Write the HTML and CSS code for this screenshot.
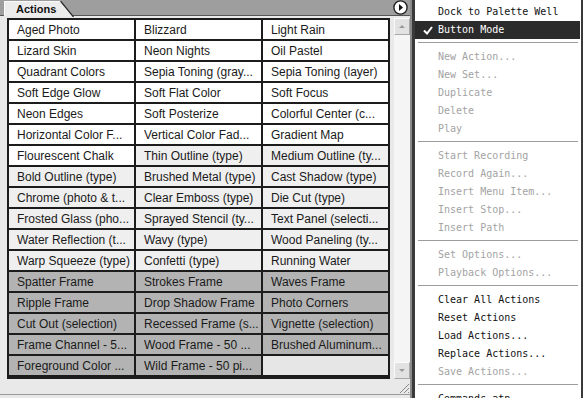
FILE: index.html
```html
<!DOCTYPE html>
<html lang="en">
<head>
  <meta charset="UTF-8">
  <title>Actions Palette</title>
  <link rel="stylesheet" href="styles.css">
</head>
<body>
  <div class="screen">
    <div class="panel">
      <div class="panel-head">
        <div class="tab">
          <span class="tab-label">Actions</span>
          <svg class="tab-end" width="14" height="16" viewBox="0 0 14 16">
            <polygon points="0,0 1,0 14,16 0,16" fill="#ececec"/>
            <line x1="0.5" y1="0" x2="13.5" y2="16" stroke="#222" stroke-width="1.2"/>
          </svg>
        </div>
        <div class="menu-btn">
          <svg width="15" height="15" viewBox="0 0 15 15">
            <circle cx="7.5" cy="7.5" r="6.6" fill="#fff" stroke="#222" stroke-width="1.4"/>
            <polygon points="6,4 10,7.5 6,11" fill="#111"/>
          </svg>
        </div>
      </div>

      <div class="panel-body">
        <div class="grid">
          <div class="cell w">Aged Photo</div>
          <div class="cell w">Blizzard</div>
          <div class="cell w">Light Rain</div>
          <div class="cell w">Lizard Skin</div>
          <div class="cell w">Neon Nights</div>
          <div class="cell w">Oil Pastel</div>
          <div class="cell w">Quadrant Colors</div>
          <div class="cell w">Sepia Toning (gray...</div>
          <div class="cell w">Sepia Toning (layer)</div>
          <div class="cell w">Soft Edge Glow</div>
          <div class="cell w">Soft Flat Color</div>
          <div class="cell w">Soft Focus</div>
          <div class="cell w">Neon Edges</div>
          <div class="cell w">Soft Posterize</div>
          <div class="cell w">Colorful Center (c...</div>
          <div class="cell w">Horizontal Color F...</div>
          <div class="cell w">Vertical Color Fad...</div>
          <div class="cell w">Gradient Map</div>
          <div class="cell w">Flourescent Chalk</div>
          <div class="cell l">Thin Outline (type)</div>
          <div class="cell l">Medium Outline (ty...</div>
          <div class="cell l">Bold Outline (type)</div>
          <div class="cell l">Brushed Metal (type)</div>
          <div class="cell l">Cast Shadow (type)</div>
          <div class="cell l">Chrome (photo &amp; t...</div>
          <div class="cell l">Clear Emboss (type)</div>
          <div class="cell l">Die Cut (type)</div>
          <div class="cell l">Frosted Glass (pho...</div>
          <div class="cell l">Sprayed Stencil (ty...</div>
          <div class="cell l">Text Panel (selecti...</div>
          <div class="cell l">Water Reflection (t...</div>
          <div class="cell l">Wavy (type)</div>
          <div class="cell l">Wood Paneling (ty...</div>
          <div class="cell l">Warp Squeeze (type)</div>
          <div class="cell l">Confetti (type)</div>
          <div class="cell l">Running Water</div>
          <div class="cell d">Spatter Frame</div>
          <div class="cell d">Strokes Frame</div>
          <div class="cell d">Waves Frame</div>
          <div class="cell d">Ripple Frame</div>
          <div class="cell d">Drop Shadow Frame</div>
          <div class="cell d">Photo Corners</div>
          <div class="cell d">Cut Out (selection)</div>
          <div class="cell d">Recessed Frame (s...</div>
          <div class="cell d">Vignette (selection)</div>
          <div class="cell d">Frame Channel - 5...</div>
          <div class="cell d">Wood Frame - 50 ...</div>
          <div class="cell d">Brushed Aluminum...</div>
          <div class="cell d">Foreground Color ...</div>
          <div class="cell d">Wild Frame - 50 pi...</div>
          <div class="cell e"></div>
        </div>

        <div class="scrollbar">
          <div class="arrow up"><span class="tri-up"></span></div>
          <div class="track"></div>
          <div class="arrow down"><span class="tri-down"></span></div>
        </div>
      </div>

      <div class="panel-foot">
        <svg class="grip" width="12" height="12" viewBox="0 0 12 12">
          <line x1="11" y1="2" x2="2" y2="11" stroke="#888"/>
          <line x1="11" y1="6" x2="6" y2="11" stroke="#888"/>
          <line x1="11" y1="10" x2="10" y2="11" stroke="#888"/>
        </svg>
      </div>
    </div>

    <div class="divider"></div>

    <ul class="menu">
      <li class="item">Dock to Palette Well</li>
      <li class="item checked">
        <svg class="check" width="10" height="9" viewBox="0 0 10 9">
          <polyline points="1,4.5 4,7.5 9,1" fill="none" stroke="#fff" stroke-width="2"/>
        </svg>
        Button Mode
      </li>
      <li class="sep"></li>
      <li class="item off">New Action...</li>
      <li class="item off">New Set...</li>
      <li class="item off">Duplicate</li>
      <li class="item off">Delete</li>
      <li class="item off">Play</li>
      <li class="sep"></li>
      <li class="item off">Start Recording</li>
      <li class="item off">Record Again...</li>
      <li class="item off">Insert Menu Item...</li>
      <li class="item off">Insert Stop...</li>
      <li class="item off">Insert Path</li>
      <li class="sep"></li>
      <li class="item off">Set Options...</li>
      <li class="item off">Playback Options...</li>
      <li class="sep"></li>
      <li class="item">Clear All Actions</li>
      <li class="item">Reset Actions</li>
      <li class="item">Load Actions...</li>
      <li class="item">Replace Actions...</li>
      <li class="item off">Save Actions...</li>
      <li class="sep"></li>
      <li class="item">Commands.atn</li>
    </ul>

    <div class="edge"></div>
  </div>
</body>
</html>
```

FILE: styles.css
```css
/* Base */
body {
  margin: 0;
  background: #fff;
  font-family: "Liberation Sans", Arial, sans-serif;
}

.screen {
  display: flex;
  width: 585px;
  height: 398px;
  overflow: hidden;
}

/* Actions palette */
.panel {
  width: 410px;
  display: flex;
  flex-direction: column;
  background: #e9e9e9;
  border-right: 2px solid #8a8a8a;
}

.panel-head {
  height: 15px;
  display: flex;
  align-items: flex-start;
  justify-content: space-between;
  background: #9e9e9e;
  border-bottom: 1px solid #555;
  padding-left: 4px;
}

.tab {
  display: flex;
  height: 15px;
  margin-top: 1px;
}

.tab-label {
  display: flex;
  align-items: center;
  padding: 0 4px 0 11px;
  background: #ececec;
  border-top: 1px solid #fafafa;
  border-left: 1px solid #fafafa;
  font-size: 11px;
  font-weight: bold;
  color: #111;
  height: 15px;
  box-sizing: border-box;
}

.tab-end {
  display: block;
}

.menu-btn {
  width: 15px;
  height: 15px;
  margin-right: 2px;
}

.menu-btn svg {
  display: block;
}

.panel-body {
  display: flex;
  gap: 4px;
  padding: 2px 0 0 7px;
}

.grid {
  display: grid;
  grid-template-columns: repeat(3, 125px);
  grid-auto-rows: 19px;
  gap: 2px;
  padding: 2px;
  background: #1c1c1c;
}

.cell {
  display: flex;
  align-items: center;
  padding-left: 8px;
  font-size: 12px;
  color: #1a1a1a;
  white-space: nowrap;
  overflow: hidden;
}

.cell.w { background: #fff; }
.cell.l { background: #efefef; }
.cell.d { background: #b3b3b3; }
.cell.e { background: #e6e6e6; }

.scrollbar {
  width: 16px;
  display: flex;
  flex-direction: column;
  background: #f5f5f5;
  height: 361px;
}

.scrollbar .track {
  flex: 1;
}

.arrow {
  height: 15px;
  display: flex;
  align-items: center;
  justify-content: center;
  background: #e2e2e2;
  border-top: 1px solid #fbfbfb;
  border-left: 1px solid #fbfbfb;
  border-right: 1px solid #a9a9a9;
  border-bottom: 1px solid #a9a9a9;
}

.tri-up {
  border-left: 3px solid transparent;
  border-right: 3px solid transparent;
  border-bottom: 3px solid #9a9a9a;
}

.tri-down {
  border-left: 3px solid transparent;
  border-right: 3px solid transparent;
  border-top: 3px solid #9a9a9a;
}

.panel-foot {
  flex: 1;
  display: flex;
  justify-content: flex-end;
  align-items: flex-end;
  border-bottom: 3px solid #e9e9e9;
  box-shadow: inset 0 -1px 0 #9a9a9a;
}

.grip {
  display: block;
  margin: 0 0 1px 0;
}

.divider {
  width: 3px;
  background: #3a3a3a;
}

/* Flyout menu */
.menu {
  flex: 1;
  margin: 0;
  padding: 3px 0 0 0;
  list-style: none;
  background: #fff;
  font-family: "DejaVu Sans Mono", "Liberation Mono", monospace;
  font-size: 10px;
  color: #111;
}

.item {
  position: relative;
  height: 18px;
  line-height: 18px;
  padding-left: 23px;
  margin-right: 1px;
  white-space: nowrap;
}

.item.off {
  color: #a3a3a3;
}

.item.checked {
  background: #2b2b2b;
  color: #fff;
}

.check {
  position: absolute;
  left: 8px;
  top: 5px;
}

.sep {
  height: 9px;
  margin: 0 3px;
  box-sizing: border-box;
  padding-top: 3px;
}

.sep::before {
  content: "";
  display: block;
  border-top: 1px solid #9c9c9c;
}

.edge {
  width: 2px;
  background: #fff;
  border-left: 2px solid #3a3a3a;
}
```
